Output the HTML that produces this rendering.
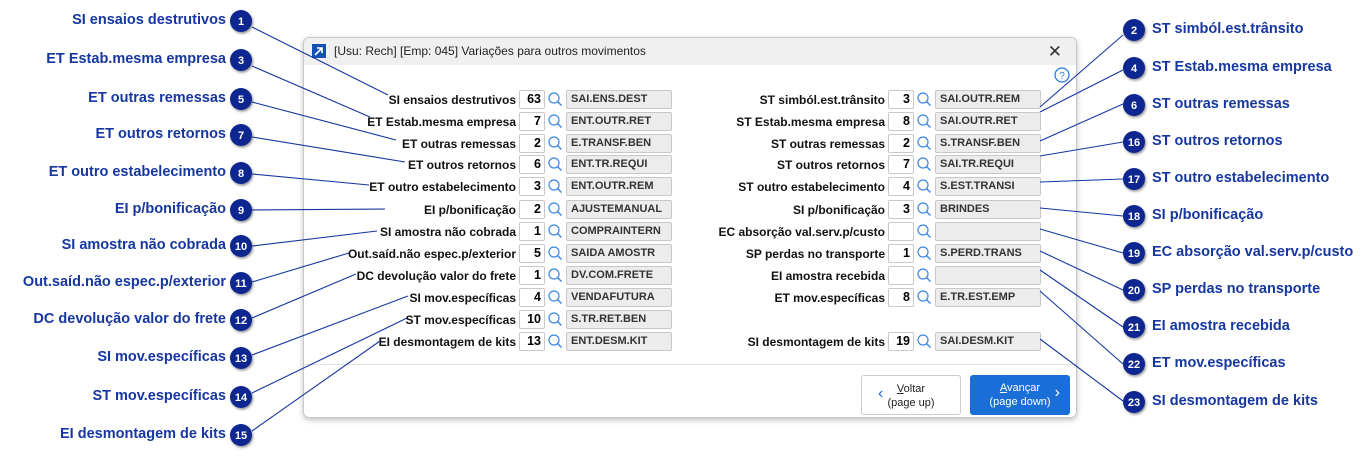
<!DOCTYPE html><html><head><meta charset="utf-8"><style>
*{margin:0;padding:0;box-sizing:border-box}
body{width:1370px;height:462px;background:#fff;position:relative;overflow:hidden;font-family:"Liberation Sans",sans-serif}
.dlg{position:absolute;left:303px;top:37px;width:774px;height:381px;border:1px solid #c8c8c8;border-radius:6px;background:#fff;box-shadow:0 2px 6px rgba(0,0,0,.25);overflow:hidden}
.tb{height:27px;background:#f0f0f0;font-size:12px;color:#222;line-height:27px;padding-left:30px;position:relative}
.tb .ic{position:absolute;left:8px;top:6px;width:14px;height:14px;background:#1450b4}
.tb .x{position:absolute;right:14px;top:0;font-size:17px;color:#333}
.r{position:absolute;height:19px;font-size:12px;font-weight:bold;color:#111}
.lb{position:absolute;right:0;top:3px;white-space:nowrap}
.n{position:absolute;width:26px;height:19px;border:1px solid #c8c8c8;border-radius:2px;text-align:right;padding-right:3px;line-height:17px;font-size:12.5px;font-weight:bold;background:#fff}
.c{position:absolute;width:106px;height:19px;border:1px solid #c8c8c8;border-radius:2px;background:#ececec;line-height:17px;padding-left:4px;font-size:11px;font-weight:bold;color:#333}
.sep{position:absolute;left:0;right:0;top:326px;border-top:1px solid #e2e2e2}
.btn{position:absolute;top:337px;height:40px;border-radius:3px;font-size:11px;text-align:center;line-height:14px;padding-top:6px}
.cl{position:absolute;font-size:14.5px;font-weight:bold;color:#1637a0;white-space:nowrap}
svg{position:absolute;left:0;top:0}
</style></head><body>
<div class="dlg">
<div class="tb"><div class="ic"><svg width="14" height="14"><path d="M3 11 L10 4 M5 4 H10 V9" stroke="#fff" stroke-width="1.6" fill="none"/></svg></div>[Usu: Rech] [Emp: 045] Variações para outros movimentos<span class="x">✕</span></div>
<div class="sep"></div>
<div class="btn" style="left:557px;width:100px;border:1px solid #ccc;color:#222"><span style="position:absolute;left:16px;top:11px;font-size:16px;color:#1a6ed8">‹</span><u>V</u>oltar<br>(page up)</div>
<div class="btn" style="left:666px;width:100px;background:#1a6ed8;color:#fff"><u>A</u>vançar<br>(page down)<span style="position:absolute;right:10px;top:11px;font-size:16px">›</span></div>
<svg width="774" height="381" style="left:-1px;top:-1px"><circle cx="759" cy="38" r="7" fill="none" stroke="#2a7be0" stroke-width="1.3"/><text x="759" y="42" font-size="10" fill="#2a7be0" text-anchor="middle" font-family="Liberation Sans">?</text></svg>
</div>
<div id="rows">
<div class="r" style="left:300px;top:90px;width:216px"><span class="lb">SI ensaios destrutivos</span></div>
<div class="r" style="left:300px;top:112px;width:216px"><span class="lb">ET Estab.mesma empresa</span></div>
<div class="r" style="left:300px;top:134px;width:216px"><span class="lb">ET outras remessas</span></div>
<div class="r" style="left:300px;top:155px;width:216px"><span class="lb">ET outros retornos</span></div>
<div class="r" style="left:300px;top:177px;width:216px"><span class="lb">ET outro estabelecimento</span></div>
<div class="r" style="left:300px;top:200px;width:216px"><span class="lb">EI p/bonificação</span></div>
<div class="r" style="left:300px;top:222px;width:216px"><span class="lb">SI amostra não cobrada</span></div>
<div class="r" style="left:300px;top:244px;width:216px"><span class="lb">Out.saíd.não espec.p/exterior</span></div>
<div class="r" style="left:300px;top:266px;width:216px"><span class="lb">DC devolução valor do frete</span></div>
<div class="r" style="left:300px;top:288px;width:216px"><span class="lb">SI mov.específicas</span></div>
<div class="r" style="left:300px;top:310px;width:216px"><span class="lb">ST mov.específicas</span></div>
<div class="r" style="left:300px;top:332px;width:216px"><span class="lb">EI desmontagem de kits</span></div>
<div class="r" style="left:680px;top:90px;width:205px"><span class="lb">ST simból.est.trânsito</span></div>
<div class="r" style="left:680px;top:112px;width:205px"><span class="lb">ST Estab.mesma empresa</span></div>
<div class="r" style="left:680px;top:134px;width:205px"><span class="lb">ST outras remessas</span></div>
<div class="r" style="left:680px;top:155px;width:205px"><span class="lb">ST outros retornos</span></div>
<div class="r" style="left:680px;top:177px;width:205px"><span class="lb">ST outro estabelecimento</span></div>
<div class="r" style="left:680px;top:200px;width:205px"><span class="lb">SI p/bonificação</span></div>
<div class="r" style="left:680px;top:222px;width:205px"><span class="lb">EC absorção val.serv.p/custo</span></div>
<div class="r" style="left:680px;top:244px;width:205px"><span class="lb">SP perdas no transporte</span></div>
<div class="r" style="left:680px;top:266px;width:205px"><span class="lb">EI amostra recebida</span></div>
<div class="r" style="left:680px;top:288px;width:205px"><span class="lb">ET mov.específicas</span></div>
<div class="r" style="left:680px;top:332px;width:205px"><span class="lb">SI desmontagem de kits</span></div>

<div class="n" style="left:519px;top:90px">63</div><div class="c" style="left:566px;top:90px">SAI.ENS.DEST</div>
<div class="n" style="left:519px;top:112px">7</div><div class="c" style="left:566px;top:112px">ENT.OUTR.RET</div>
<div class="n" style="left:519px;top:134px">2</div><div class="c" style="left:566px;top:134px">E.TRANSF.BEN</div>
<div class="n" style="left:519px;top:155px">6</div><div class="c" style="left:566px;top:155px">ENT.TR.REQUI</div>
<div class="n" style="left:519px;top:177px">3</div><div class="c" style="left:566px;top:177px">ENT.OUTR.REM</div>
<div class="n" style="left:519px;top:200px">2</div><div class="c" style="left:566px;top:200px">AJUSTEMANUAL</div>
<div class="n" style="left:519px;top:222px">1</div><div class="c" style="left:566px;top:222px">COMPRAINTERN</div>
<div class="n" style="left:519px;top:244px">5</div><div class="c" style="left:566px;top:244px">SAIDA AMOSTR</div>
<div class="n" style="left:519px;top:266px">1</div><div class="c" style="left:566px;top:266px">DV.COM.FRETE</div>
<div class="n" style="left:519px;top:288px">4</div><div class="c" style="left:566px;top:288px">VENDAFUTURA</div>
<div class="n" style="left:519px;top:310px">10</div><div class="c" style="left:566px;top:310px">S.TR.RET.BEN</div>
<div class="n" style="left:519px;top:332px">13</div><div class="c" style="left:566px;top:332px">ENT.DESM.KIT</div>

<div class="n" style="left:888px;top:90px">3</div><div class="c" style="left:935px;top:90px">SAI.OUTR.REM</div>
<div class="n" style="left:888px;top:112px">8</div><div class="c" style="left:935px;top:112px">SAI.OUTR.RET</div>
<div class="n" style="left:888px;top:134px">2</div><div class="c" style="left:935px;top:134px">S.TRANSF.BEN</div>
<div class="n" style="left:888px;top:155px">7</div><div class="c" style="left:935px;top:155px">SAI.TR.REQUI</div>
<div class="n" style="left:888px;top:177px">4</div><div class="c" style="left:935px;top:177px">S.EST.TRANSI</div>
<div class="n" style="left:888px;top:200px">3</div><div class="c" style="left:935px;top:200px">BRINDES</div>
<div class="n" style="left:888px;top:222px"></div><div class="c" style="left:935px;top:222px"></div>
<div class="n" style="left:888px;top:244px">1</div><div class="c" style="left:935px;top:244px">S.PERD.TRANS</div>
<div class="n" style="left:888px;top:266px"></div><div class="c" style="left:935px;top:266px"></div>
<div class="n" style="left:888px;top:288px">8</div><div class="c" style="left:935px;top:288px">E.TR.EST.EMP</div>
<div class="n" style="left:888px;top:332px">19</div><div class="c" style="left:935px;top:332px">SAI.DESM.KIT</div>
</div>

<div class="cl" style="right:1144px;top:12px">SI ensaios destrutivos</div>
<div class="cl" style="right:1144px;top:51px">ET Estab.mesma empresa</div>
<div class="cl" style="right:1144px;top:90px">ET outras remessas</div>
<div class="cl" style="right:1144px;top:126px">ET outros retornos</div>
<div class="cl" style="right:1144px;top:164px">ET outro estabelecimento</div>
<div class="cl" style="right:1144px;top:201px">EI p/bonificação</div>
<div class="cl" style="right:1144px;top:237px">SI amostra não cobrada</div>
<div class="cl" style="right:1144px;top:274px">Out.saíd.não espec.p/exterior</div>
<div class="cl" style="right:1144px;top:311px">DC devolução valor do frete</div>
<div class="cl" style="right:1144px;top:349px">SI mov.específicas</div>
<div class="cl" style="right:1144px;top:388px">ST mov.específicas</div>
<div class="cl" style="right:1144px;top:426px">EI desmontagem de kits</div>

<div class="cl" style="left:1152px;top:21px">ST simból.est.trânsito</div>
<div class="cl" style="left:1152px;top:59px">ST Estab.mesma empresa</div>
<div class="cl" style="left:1152px;top:96px">ST outras remessas</div>
<div class="cl" style="left:1152px;top:133px">ST outros retornos</div>
<div class="cl" style="left:1152px;top:170px">ST outro estabelecimento</div>
<div class="cl" style="left:1152px;top:207px">SI p/bonificação</div>
<div class="cl" style="left:1152px;top:244px">EC absorção val.serv.p/custo</div>
<div class="cl" style="left:1152px;top:281px">SP perdas no transporte</div>
<div class="cl" style="left:1152px;top:318px">EI amostra recebida</div>
<div class="cl" style="left:1152px;top:355px">ET mov.específicas</div>
<div class="cl" style="left:1152px;top:393px">SI desmontagem de kits</div>

<svg width="1370" height="462" style="pointer-events:none">
<defs><filter id="sh"><feDropShadow dx="1" dy="1.5" stdDeviation="1.2" flood-opacity=".45"/></filter>
<g id="mag"><circle cx="0" cy="0" r="5" fill="none" stroke="#3a86e6" stroke-width="1.2"/><line x1="3.6" y1="3.6" x2="7.5" y2="7.5" stroke="#3a86e6" stroke-width="1.4"/></g></defs>
<g>
<use href="#mag" x="554" y="98"/><use href="#mag" x="554" y="120"/><use href="#mag" x="554" y="142"/><use href="#mag" x="554" y="163"/><use href="#mag" x="554" y="185"/><use href="#mag" x="554" y="208"/><use href="#mag" x="554" y="230"/><use href="#mag" x="554" y="252"/><use href="#mag" x="554" y="274"/><use href="#mag" x="554" y="296"/><use href="#mag" x="554" y="318"/><use href="#mag" x="554" y="340"/>
<use href="#mag" x="923" y="98"/><use href="#mag" x="923" y="120"/><use href="#mag" x="923" y="142"/><use href="#mag" x="923" y="163"/><use href="#mag" x="923" y="185"/><use href="#mag" x="923" y="208"/><use href="#mag" x="923" y="230"/><use href="#mag" x="923" y="252"/><use href="#mag" x="923" y="274"/><use href="#mag" x="923" y="296"/><use href="#mag" x="923" y="340"/>
</g>
<g stroke="#1637a0" stroke-width="1.1" fill="none">
<path d="M252 27 L388 95"/><path d="M252 66 L370 117"/><path d="M252 102 L396 140"/><path d="M252 137 L405 162"/><path d="M252 174 L369 185"/><path d="M252 210 L385 209"/><path d="M252 246 L377 231"/><path d="M252 282 L349 253"/><path d="M252 318 L356 274"/><path d="M252 355 L408 296"/><path d="M252 393 L407 318"/><path d="M252 431 L380 341"/>
<path d="M1040 107 L1123 35"/><path d="M1040 112 L1123 70"/><path d="M1040 141 L1123 104"/><path d="M1040 156 L1123 142"/><path d="M1040 182 L1123 179"/><path d="M1040 208 L1123 216"/><path d="M1040 229 L1123 253"/><path d="M1040 251 L1123 290"/><path d="M1040 270 L1123 327"/><path d="M1040 291 L1123 364"/><path d="M1040 339 L1123 401"/>
</g>
<g filter="url(#sh)" fill="#0c2590">
<circle cx="241" cy="21" r="11"/><circle cx="241" cy="60" r="11"/><circle cx="241" cy="99" r="11"/><circle cx="241" cy="135" r="11"/><circle cx="241" cy="173" r="11"/><circle cx="241" cy="210" r="11"/><circle cx="241" cy="246" r="11"/><circle cx="241" cy="283" r="11"/><circle cx="241" cy="320" r="11"/><circle cx="241" cy="358" r="11"/><circle cx="241" cy="397" r="11"/><circle cx="241" cy="435" r="11"/>
<circle cx="1134" cy="30" r="11"/><circle cx="1134" cy="68" r="11"/><circle cx="1134" cy="105" r="11"/><circle cx="1134" cy="142" r="11"/><circle cx="1134" cy="179" r="11"/><circle cx="1134" cy="216" r="11"/><circle cx="1134" cy="253" r="11"/><circle cx="1134" cy="290" r="11"/><circle cx="1134" cy="327" r="11"/><circle cx="1134" cy="364" r="11"/><circle cx="1134" cy="402" r="11"/>
</g>
<g fill="#fff" font-family="Liberation Sans" font-weight="bold" font-size="11" text-anchor="middle">
<text x="241" y="25">1</text><text x="241" y="64">3</text><text x="241" y="103">5</text><text x="241" y="139">7</text><text x="241" y="177">8</text><text x="241" y="214">9</text><text x="241" y="250">10</text><text x="241" y="287">11</text><text x="241" y="324">12</text><text x="241" y="362">13</text><text x="241" y="401">14</text><text x="241" y="439">15</text>
<text x="1134" y="34">2</text><text x="1134" y="72">4</text><text x="1134" y="109">6</text><text x="1134" y="146">16</text><text x="1134" y="183">17</text><text x="1134" y="220">18</text><text x="1134" y="257">19</text><text x="1134" y="294">20</text><text x="1134" y="331">21</text><text x="1134" y="368">22</text><text x="1134" y="406">23</text>
</g>
</svg>
</body></html>
